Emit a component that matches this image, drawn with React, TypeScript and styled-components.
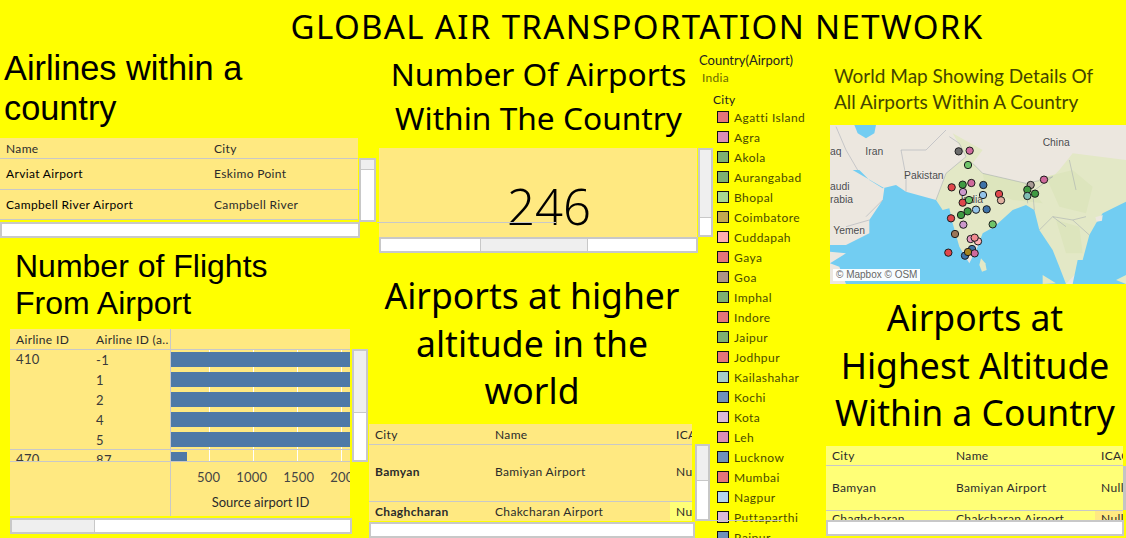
import React from "react";
import styled, { createGlobalStyle } from "styled-components";

const Global = createGlobalStyle`
  html, body { margin: 0; padding: 0; background: #ffff00; }
  body { width: 1126px; height: 538px; overflow: hidden; font-family: "Lato", "Noto Sans", sans-serif; color: #222; }
`;

const Page = styled.div`
  width: 1126px;
  height: 538px;
  overflow: hidden;
  background: #ffff00;
`;
const MainTitle = styled.h1`
  margin: 0;
  height: 50px;
  padding: 8px 0 0 148px;
  box-sizing: border-box;
  text-align: center;
  font: 400 33px/38px "Noto Sans", sans-serif;
  letter-spacing: 1.35px;
  color: #000;
`;
const Columns = styled.div`
  display: grid;
  grid-template-columns: 369px 328px 129px 300px;
  height: 488px;
`;
const Column = styled.section`
  position: relative;
  display: flex;
  flex-direction: column;
  min-width: 0;
`;
const ArialHeading = styled.h2<{ $size: number; $line: number; $left: number; $height: number; $top?: number; $lift?: number }>`
  margin: ${(p) => -(p.$lift ?? 0)}px 0 ${(p) => p.$lift ?? 0}px;
  height: ${(p) => p.$height}px;
  padding-left: ${(p) => p.$left}px;
  padding-top: ${(p) => p.$top ?? 0}px;
  box-sizing: border-box;
  font: 400 ${(p) => p.$size}px/${(p) => p.$line}px "Liberation Sans", sans-serif;
  color: #000;
`;
const BookHeading = styled.h2<{ $height: number; $top?: number; $shift?: number; $size?: number; $line?: number }>`
  margin: 0;
  height: ${(p) => p.$height}px;
  padding-top: ${(p) => p.$top ?? 0}px;
  padding-left: ${(p) => Math.max(p.$shift ?? 0, 0)}px;
  padding-right: ${(p) => Math.max(-(p.$shift ?? 0), 0)}px;
  box-sizing: border-box;
  text-align: center;
  font: 400 ${(p) => p.$size ?? 35.5}px/${(p) => p.$line ?? 47.5}px "Noto Sans", sans-serif;
  white-space: nowrap;
  color: #000;
`;
const Tile = styled.div<{ $left: number; $w: number; $h: number; $bar: number; $gap?: number; $rowGap?: number }>`
  display: grid;
  grid-template-columns: ${(p) => p.$w}px ${(p) => p.$bar}px;
  grid-template-rows: ${(p) => p.$h}px auto;
  column-gap: ${(p) => p.$gap ?? 1}px;
  row-gap: ${(p) => p.$rowGap ?? 2}px;
  margin-left: ${(p) => p.$left}px;
`;
const Sheet = styled.div<{ $bg?: string }>`
  position: relative;
  overflow: hidden;
  background: ${(p) => p.$bg ?? "#ffe981"};
  font-size: 12px;
  letter-spacing: 0.35px;
`;
const Row = styled.div<{ $h: number; $cols: string; $line?: boolean; $lift?: number }>`
  display: grid;
  grid-template-columns: ${(p) => p.$cols};
  align-items: center;
  height: ${(p) => p.$h}px;
  padding-bottom: ${(p) => p.$lift ?? 0}px;
  box-sizing: border-box;
  border-bottom: ${(p) => (p.$line === false ? "0" : "1px solid #c8c8c8")};
  white-space: nowrap;
  overflow: hidden;
`;
const Cell = styled.div<{ $bold?: boolean; $hl?: string; $dark?: boolean }>`
  padding-left: 6px;
  height: 100%;
  display: flex;
  align-items: center;
  overflow: hidden;
  font-weight: ${(p) => (p.$bold ? 700 : 400)};
  background: ${(p) => p.$hl ?? "transparent"};
  color: ${(p) => (p.$dark ? "#000" : "#2b2b2b")};
`;
const VBar = styled.div<{ $top?: number; $h: number; $thumb: number }>`
  height: ${(p) => p.$h}px;
  margin-top: ${(p) => p.$top ?? 0}px;
  box-sizing: border-box;
  border: 2px solid #c8c8c8;
  background: linear-gradient(#efefef ${(p) => p.$thumb}px, #c8c8c8 ${(p) => p.$thumb}px, #c8c8c8 ${(p) => p.$thumb + 1}px, #fff ${(p) => p.$thumb + 1}px);
`;
const EdgeBar = styled.div`
  width: 3px;
  height: 44px;
  margin-top: 20px;
  background: #c4c4c4;
`;
const HBar = styled.div<{ $w?: number; $from?: number; $to?: number }>`
  position: relative;
  grid-column: 1 / -1;
  width: ${(p) => p.$w}px;
  height: 16px;
  box-sizing: border-box;
  border: 2px solid #c8c8c8;
  background: #fff;
  &::before {
    content: "";
    position: absolute;
    top: 0;
    bottom: 0;
    left: ${(p) => p.$from ?? 0}px;
    width: ${(p) => (p.$to ?? 0) - (p.$from ?? 0)}px;
    background: #efefef;
    box-shadow: 1px 0 0 #c8c8c8, -1px 0 0 #c8c8c8;
    display: ${(p) => (p.$to ? "block" : "none")};
  }
`;
const Chart = styled.div`
  display: grid;
  grid-template-columns: 160px 1fr;
  height: 100%;
`;
const ChartHead = styled.div`
  display: grid;
  grid-template-columns: 80px 81px 1fr;
  align-items: center;
  height: 21px;
  box-sizing: border-box;
  border-bottom: 1px solid #c8c8c8;
  grid-column: 1 / -1;
`;
const HeadCell = styled.div<{ $rule?: boolean }>`
  padding: 1px 0 0 6px;
  height: 100%;
  box-sizing: border-box;
  display: flex;
  align-items: center;
  overflow: hidden;
  white-space: nowrap;
  border-right: ${(p) => (p.$rule ? "1px solid #c8c8c8" : "0")};
  color: #2b2b2b;
`;
const Group = styled.div<{ $h: number; $line?: boolean }>`
  grid-column: 1 / -1;
  display: grid;
  grid-template-columns: 80px 81px 1fr;
  height: ${(p) => p.$h}px;
  box-sizing: border-box;
  overflow: hidden;
  border-bottom: ${(p) => (p.$line ? "1px solid #c8c8c8" : "0")};
`;
const GroupId = styled.div`
  padding: 0 0 0 6px;
  font-size: 13px;
  line-height: 18px;
  color: #3a3a3a;
`;
const Ids = styled.div`
  border-right: 1px solid #c8c8c8;
`;
const IdRow = styled.div`
  height: 20px;
  line-height: 20px;
  padding-left: 6px;
  font-size: 13px;
  color: #3a3a3a;
`;
const Bars = styled.div`
  position: relative;
  background-image: repeating-linear-gradient(90deg, transparent 0 43px, #fff 43px 44px);
  background-position: -5px 0;
`;
const BarSlot = styled.div`
  height: 20px;
  padding-top: 2px;
  box-sizing: border-box;
`;
const Bar = styled.div<{ $w?: number }>`
  height: 15px;
  width: ${(p) => (p.$w ? `${p.$w}px` : "100%")};
  background: #4e79a7;
`;
const Axis = styled.div`
  grid-column: 1 / -1;
  display: grid;
  grid-template-columns: 161px 1fr;
  height: 55px;
`;
const AxisBlank = styled.div`
  border-right: 1px solid #c8c8c8;
`;
const AxisBody = styled.div`
  display: flex;
  flex-direction: column;
  align-items: stretch;
  overflow: hidden;
`;
const Ticks = styled.div`
  display: flex;
  gap: 16px;
  padding: 7px 0 0 26px;
  font-size: 13px;
  line-height: 16px;
  letter-spacing: 0.2px;
  color: #444;
  white-space: nowrap;
`;
const AxisLabel = styled.div`
  margin-top: 9px;
  text-align: center;
  font-size: 13px;
  letter-spacing: 0;
  color: #2b2b2b;
`;
const BigValue = styled.div`
  display: flex;
  justify-content: center;
  height: 100%;
  padding: 30px 0 0 22px;
  box-sizing: border-box;
  font: 300 49px/56px "Noto Sans", sans-serif;
  letter-spacing: 0;
  color: #000;
`;
const Rule = styled.div<{ $left: number; $top: number; $w: number }>`
  position: absolute;
  left: ${(p) => p.$left}px;
  top: ${(p) => p.$top}px;
  width: ${(p) => p.$w}px;
  height: 1px;
  background: #c8c8c8;
`;
const Filter = styled.div`
  padding: 2px 0 0 2px;
  height: 40px;
  box-sizing: border-box;
  font-size: 13px;
  line-height: 17px;
  white-space: nowrap;
`;
const FilterValue = styled.div`
  padding-left: 3px;
  font-size: 12px;
  letter-spacing: 0.3px;
  color: #6a6a00;
`;
const LegendTitle = styled.div`
  padding: 0 0 0 16px;
  height: 17px;
  font-size: 12px;
  line-height: 20px;
  letter-spacing: 0.3px;
`;
const LegendRow = styled.div`
  display: flex;
  align-items: center;
  gap: 5px;
  height: 20px;
  padding-left: 20px;
  font-size: 12px;
  letter-spacing: 0.45px;
  color: #4a4a00;
  white-space: nowrap;
  flex-shrink: 0;
`;
const Swatch = styled.span<{ $c: string }>`
  width: 12px;
  height: 12px;
  background: ${(p) => p.$c};
  outline: 1px solid #111;
  outline-offset: -1px;
`;
const MapTitle = styled.div`
  padding: 13px 0 0 8px;
  height: 75px;
  box-sizing: border-box;
  font: 400 19px/26px "Lato", sans-serif;
  letter-spacing: 0;
  white-space: nowrap;
  color: #444400;
`;
const MapBox = styled.div`
  position: relative;
  margin-left: 4px;
  height: 159px;
  overflow: hidden;
  background: #72cdf2;
`;
const MapSvg = styled.svg`
  display: block;
  width: 296px;
  height: 159px;
`;
const Credit = styled.div`
  position: absolute;
  left: 3px;
  bottom: 3px;
  padding: 0 3px;
  background: rgba(255, 255, 255, 0.95);
  font: 400 10px/12px "Liberation Sans", sans-serif;
  color: #666;
`;

const airportCols = "120px 181px 1fr";
const altitudeCols = "124px 145px 1fr";
const legend: [string, string][] = [
  ["Agatti Island", "#e5757a"], ["Agra", "#dc8fb5"], ["Akola", "#7eb070"], ["Aurangabad", "#7eb070"],
  ["Bhopal", "#a8d88f"], ["Coimbatore", "#c2a84f"], ["Cuddapah", "#ffadb0"], ["Gaya", "#e5757a"],
  ["Goa", "#ad9484"], ["Imphal", "#7eb070"], ["Indore", "#e5757a"], ["Jaipur", "#7eb070"],
  ["Jodhpur", "#e5757a"], ["Kailashahar", "#a6cdc8"], ["Kochi", "#7091b9"], ["Kota", "#dcb9d6"],
  ["Leh", "#dc8fb5"], ["Lucknow", "#7091b9"], ["Mumbai", "#e5757a"], ["Nagpur", "#b4d4ee"],
  ["Puttaparthi", "#dcb9d6"], ["Raipur", "#7091b9"],
];
const dots: [number, number, string][] = [
  [398, 94, "#6b6b6b"], [431, 92, "#cf6a9c"], [426, 135, "#6fc46a"], [654, 179, "#cf6a9c"], [614, 195, "#a89a94"],
  [377, 202, "#e0474c"], [410, 194, "#3f9a42"], [436, 189, "#cf6a9c"], [472, 195, "#3f73a8"], [411, 216, "#cc99cc"],
  [471, 225, "#94c4ea"], [519, 222, "#e0474c"], [525, 241, "#e0b0a0"], [604, 209, "#3f9a42"], [627, 221, "#3f9a42"],
  [604, 228, "#7fbdb5"], [410, 248, "#e0474c"], [429, 240, "#6fc46a"], [405, 285, "#3f9a42"], [425, 274, "#3f9a42"],
  [450, 269, "#94c4ea"], [482, 268, "#3f73a8"], [375, 295, "#e0474c"], [412, 314, "#cc99cc"], [500, 313, "#6fc46a"],
  [387, 342, "#9a7558"], [434, 357, "#e79ac0"], [456, 364, "#ffb0b4"], [446, 353, "#f08a90"], [367, 398, "#e0474c"],
  [438, 387, "#3f73a8"], [446, 400, "#cf6a9c"], [417, 407, "#3f73a8"], [426, 396, "#a8861e"],
];

export default function App() {
  return (
    <Page>
      <Global />
      <MainTitle>GLOBAL AIR TRANSPORTATION NETWORK</MainTitle>
      <Columns>
        <Column>
          <ArialHeading $size={34.3} $line={40} $left={4} $height={88} $lift={2}>Airlines within a<br />country</ArialHeading>
          <Tile $left={0} $w={358} $h={82} $bar={17}>
            <Sheet>
              <Row $h={21} $cols="208px 1fr"><Cell>Name</Cell><Cell>City</Cell></Row>
              <Row $h={31} $cols="208px 1fr" $lift={2}><Cell $dark>Arviat Airport</Cell><Cell>Eskimo Point</Cell></Row>
              <Row $h={30} $cols="208px 1fr"><Cell $dark>Campbell River Airport</Cell><Cell>Campbell River</Cell></Row>
            </Sheet>
            <VBar $top={20} $h={64} $thumb={9} />
            <HBar $w={360} />
          </Tile>
          <ArialHeading $size={32} $line={37} $left={15} $height={91} $top={10}>Number of Flights<br />From Airport</ArialHeading>
          <Tile $left={10} $w={340} $h={187} $bar={16} $gap={2}>
            <Sheet>
              <Chart>
                <ChartHead>
                  <HeadCell>Airline ID</HeadCell>
                  <HeadCell $rule>Airline ID (a..</HeadCell>
                  <HeadCell />
                </ChartHead>
                <Group $h={100} $line>
                  <GroupId>410</GroupId>
                  <Ids>{["-1", "1", "2", "4", "5"].map((v) => <IdRow key={v}>{v}</IdRow>)}</Ids>
                  <Bars>{[0, 1, 2, 3, 4].map((v) => <BarSlot key={v}><Bar /></BarSlot>)}</Bars>
                </Group>
                <Group $h={12} $line>
                  <GroupId>470</GroupId>
                  <Ids><IdRow>87</IdRow></Ids>
                  <Bars><BarSlot><Bar $w={16} /></BarSlot></Bars>
                </Group>
                <Axis>
                  <AxisBlank />
                  <AxisBody>
                    <Ticks><span>500</span><span>1000</span><span>1500</span><span>2000</span></Ticks>
                    <AxisLabel>Source airport ID</AxisLabel>
                  </AxisBody>
                </Axis>
              </Chart>
            </Sheet>
            <VBar $top={20} $h={113} $thumb={61} />
            <HBar $w={342} $from={0} $to={82} />
          </Tile>
        </Column>

        <Column>
          <BookHeading $height={98} $top={2} $shift={11} $size={31.7} $line={44}>Number Of Airports<br />Within The Country</BookHeading>
          <Tile $left={10} $w={318} $h={89} $bar={15} $rowGap={0}>
            <Sheet>
              <BigValue>246</BigValue>
            </Sheet>
            <VBar $h={89} $thumb={67} />
            <HBar $w={319} $from={100} $to={206} />
          </Tile>
          <Rule $left={8} $top={172} $w={179} />
          <BookHeading $height={171} $top={19} $shift={-2}>Airports at higher<br />altitude in the<br />world</BookHeading>
          <Tile $left={0} $w={323} $h={97} $bar={15} $gap={3} $rowGap={1}>
            <Sheet>
              <Row $h={21} $cols={airportCols}><Cell>City</Cell><Cell>Name</Cell><Cell>ICAO</Cell></Row>
              <Row $h={57} $cols={airportCols} $lift={3}><Cell $bold>Bamyan</Cell><Cell>Bamiyan Airport</Cell><Cell>Null</Cell></Row>
              <Row $h={19} $cols={airportCols} $line={false}><Cell $bold>Chaghcharan</Cell><Cell>Chakcharan Airport</Cell><Cell $hl="#ffff77">Null</Cell></Row>
            </Sheet>
            <VBar $top={20} $h={77} $thumb={34} />
            <HBar $w={326} />
          </Tile>
        </Column>

        <Column>
          <Filter>
            Country(Airport)
            <FilterValue>India</FilterValue>
          </Filter>
          <LegendTitle>City</LegendTitle>
          {legend.map(([name, c]) => (
            <LegendRow key={name}><Swatch $c={c} />{name}</LegendRow>
          ))}
          <Rule $left={13} $top={470} $w={72} />
        </Column>

        <Column>
          <MapTitle>World Map Showing Details Of<br />All Airports Within A Country</MapTitle>
          <MapBox>
            <MapSvg viewBox="12 15 888 477" preserveAspectRatio="none">
              <rect x="12" y="15" width="888" height="477" fill="#ece7df" />
              <path d="M360 160L420 110L380 40L470 90L440 130L470 160L600 190L680 170L700 150L740 100L900 120L900 300L720 492L640 400L620 270L400 400L330 240Z" fill="#e3e8c6" />
              <path d="M470 160L600 190L650 250L560 240L480 210Z M660 170L740 150L800 200L780 280L700 260Z M690 300L760 320L770 400L720 400Z" fill="#dde5bd" />
              <path d="M12 375L60 375L130 340L130 300L170 240L175 205L115 170L80 150L100 150L130 180L170 205L210 195L240 215L330 240L350 270L370 265L380 310L400 380L430 430L455 380L470 340L505 320L560 270L600 255L625 270L640 330L680 390L700 440L720 492L740 492L755 420L770 420L790 345L810 310L830 280L880 255L900 245L900 492L60 492L40 440L12 430L60 400L12 395Z" fill="#72cdf2" />
              <path d="M85 15L150 15L145 40L120 55L95 40Z" fill="#72cdf2" />
              <path d="M465 415L478 430L482 450L468 455L460 435Z" fill="#e3e8c6" />
              <path d="M808 292L830 285L828 302L812 305Z" fill="#ece7df" />
              <path d="M650 465L690 490L650 492Z M870 480L900 465L900 492Z" fill="#e3e8c6" />
              <g fill="none" stroke="#9aa0ad" strokeWidth="1.4" strokeLinejoin="round">
                <path d="M30 20L60 90L95 150M225 90L240 170L240 215M225 90L300 90L360 30M330 240L360 160L420 110L400 70L370 50" />
                <path d="M440 130L470 160L600 190L650 180L680 170M600 190L605 250M625 270L620 215L680 170M640 330L680 290L720 320M680 290L740 300L790 345M740 300L780 290" />
                <path d="M730 120L750 210M130 300L60 320M170 240L120 290" />
              </g>
              <g fill="#4a4a4a" fontFamily="Liberation Sans, sans-serif" fontSize="31" stroke="#ffffff" strokeWidth="0.8" paintOrder="stroke">
                <text x="12" y="104">aq</text>
                <text x="118" y="104">Iran</text>
                <text x="234" y="177">Pakistan</text>
                <text x="650" y="78">China</text>
                <text x="12" y="209">audi</text>
                <text x="12" y="250">rabia</text>
                <text x="22" y="341">Yemen</text>
                <text x="404" y="250">India</text>
              </g>
              <g stroke="#1c1c1c" strokeWidth="3">
                {dots.map(([x, y, c], i) => <circle key={i} cx={x} cy={y} r="11" fill={c} />)}
              </g>
            </MapSvg>
            <Credit>© Mapbox © OSM</Credit>
          </MapBox>
          <BookHeading $height={162} $top={10} $shift={-2}>Airports at<br />Highest Altitude<br />Within a Country</BookHeading>
          <Tile $left={0} $w={297} $h={74} $bar={3} $gap={0} $rowGap={0}>
            <Sheet $bg="#ffff77">
              <Row $h={20} $cols={altitudeCols}><Cell>City</Cell><Cell>Name</Cell><Cell>ICAO</Cell></Row>
              <Row $h={45} $cols={altitudeCols} $lift={2}><Cell>Bamyan</Cell><Cell>Bamiyan Airport</Cell><Cell>Null</Cell></Row>
              <Row $h={14} $cols={altitudeCols} $line={false}><Cell>Chaghcharan</Cell><Cell>Chakcharan Airport</Cell><Cell $hl="#ffe981">Null</Cell></Row>
            </Sheet>
            <EdgeBar />
            <HBar $w={298} />
          </Tile>
        </Column>
      </Columns>
    </Page>
  );
}
